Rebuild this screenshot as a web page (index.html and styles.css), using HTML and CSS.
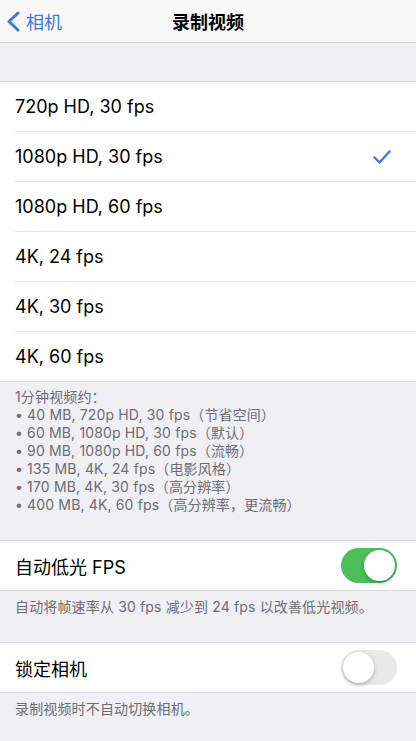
FILE: index.html
```html
<!DOCTYPE html>
<html>
    <head>
        <title>录制视频</title>
        <link rel="stylesheet" href="styles.css">
    </head>
    <body>
        <nav class="navbar">
            <a class="back" href="#">
                <svg class="chevron" width="14" height="21" viewBox="0 0 14 21">
                    <path d="M12 2 L3 10.5 L12 19" fill="none" stroke="#3d7ad6" stroke-width="3" stroke-linecap="round" stroke-linejoin="round"/>
                </svg>
                <span>相机</span>
            </a>
            <h1>录制视频</h1>
        </nav>

        <div class="spacer"></div>

        <ul class="group">
            <li><span>720p HD, 30 fps</span></li>
            <li>
                <span>1080p HD, 30 fps</span>
                <svg class="check" width="18" height="14" viewBox="0 0 18 14">
                    <path d="M1.5 7.5 L6.5 12.5 L16.5 1.5" fill="none" stroke="#3d7ad6" stroke-width="2.4" stroke-linecap="round" stroke-linejoin="round"/>
                </svg>
            </li>
            <li><span>1080p HD, 60 fps</span></li>
            <li><span>4K, 24 fps</span></li>
            <li><span>4K, 30 fps</span></li>
            <li><span>4K, 60 fps</span></li>
        </ul>

        <div class="footnote list_note">
            1分钟视频约：<br/>
            • 40 MB, 720p HD, 30 fps（节省空间）<br/>
            • 60 MB, 1080p HD, 30 fps（默认）<br/>
            • 90 MB, 1080p HD, 60 fps（流畅）<br/>
            • 135 MB, 4K, 24 fps（电影风格）<br/>
            • 170 MB, 4K, 30 fps（高分辨率）<br/>
            • 400 MB, 4K, 60 fps（高分辨率，更流畅）
        </div>

        <ul class="group">
            <li>
                <span>自动低光 FPS</span>
                <span class="toggle on"></span>
            </li>
        </ul>
        <div class="footnote">自动将帧速率从 30 fps 减少到 24 fps 以改善低光视频。</div>

        <ul class="group">
            <li>
                <span>锁定相机</span>
                <span class="toggle"></span>
            </li>
        </ul>
        <div class="footnote">录制视频时不自动切换相机。</div>
    </body>
</html>
```

FILE: styles.css
```css
body{
    margin: 0;
    padding: 0;
    font-family: Inter, "Noto Sans CJK SC", sans-serif;
    background: #efeff4;
    color: #000;
    overflow: hidden;
}

.navbar {
    position: relative;
    height: 42px;
    background: #f8f8f8;
    border-bottom: 1px solid #d4d4d8;
    display: flex;
    align-items: center;
    justify-content: center;
}

.navbar h1 {
    margin: 0;
    font-size: 18px;
    font-weight: 700;
}

.back {
    position: absolute;
    left: 6px;
    top: 0;
    height: 42px;
    display: flex;
    align-items: center;
    gap: 6px;
    color: #3d7ad6;
    text-decoration: none;
    font-size: 18px;
}

.spacer {
    height: 38px;
}

.group {
    list-style-type: none;
    margin: 0;
    padding: 0 0 0 15px;
    background: #fff;
    border-top: 1px solid #dcdce0;
    border-bottom: 1px solid #dcdce0;
}

.group li {
    height: 49px;
    display: flex;
    align-items: center;
    justify-content: space-between;
    padding-right: 19px;
    font-size: 18px;
    border-bottom: 1px solid #e4e4e8;
}

.group li:last-child {
    border-bottom: none;
}

.check {
    margin-right: 6px;
}

.footnote {
    padding: 7px 15px 0 15px;
    height: 44px;
    font-size: 14px;
    line-height: 18px;
    letter-spacing: 0.15px;
    color: #6d6d72;
}

.list_note {
    height: auto;
    padding: 6px 15px 26px 15px;
}

.toggle {
    position: relative;
    width: 56px;
    height: 35px;
    border-radius: 18px;
    background: #e9e9ea;
}

.toggle::after {
    content: '';
    position: absolute;
    top: 2px;
    left: 2px;
    width: 31px;
    height: 31px;
    border-radius: 50%;
    background: #fff;
    box-shadow: 0 2px 4px rgba(0,0,0,0.25);
}

.toggle.on {
    background: #4cbe5a;
}

.toggle.on::after {
    left: 23px;
}
```
